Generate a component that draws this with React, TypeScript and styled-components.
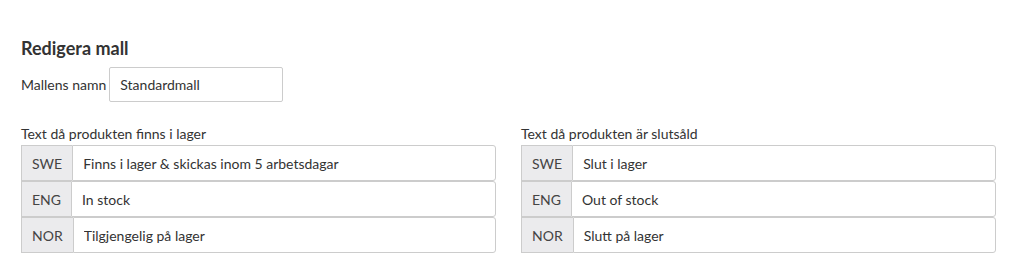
import styled, { createGlobalStyle } from 'styled-components';

const GlobalStyle = createGlobalStyle`
  html, body {
    margin: 0;
    padding: 0;
    background: #ffffff;
    font-family: 'Lato', 'Liberation Sans', sans-serif;
    color: #333333;
  }
`;

type Row = { lang: string; text: string };

const inStock: Row[] = [
  { lang: 'SWE', text: 'Finns i lager & skickas inom 5 arbetsdagar' },
  { lang: 'ENG', text: 'In stock' },
  { lang: 'NOR', text: 'Tilgjengelig på lager' },
];

const soldOut: Row[] = [
  { lang: 'SWE', text: 'Slut i lager' },
  { lang: 'ENG', text: 'Out of stock' },
  { lang: 'NOR', text: 'Slutt på lager' },
];

const TextGroup = ({ label, rows }: { label: string; rows: Row[] }) => (
  <Group>
    <GroupLabel>{label}</GroupLabel>
    {rows.map((row) => (
      <InputGroup key={row.lang}>
        <Addon>{row.lang}</Addon>
        <GroupInput defaultValue={row.text} />
      </InputGroup>
    ))}
  </Group>
);

const App = () => {
  return (
    <Page>
      <GlobalStyle />
      <Title>Redigera mall</Title>
      <NameRow>
        <NameLabel>Mallens namn</NameLabel>
        <NameInput defaultValue="Standardmall" />
      </NameRow>
      <Columns>
        <TextGroup label="Text då produkten finns i lager" rows={inStock} />
        <TextGroup label="Text då produkten är slutsåld" rows={soldOut} />
      </Columns>
    </Page>
  );
};

export default App;

const Page = styled.div`
  padding: 38px 21px 0 21px;
  width: 1025px;
  height: 276px;
  box-sizing: border-box;
`;

const Title = styled.h2`
  margin: 0;
  font-size: 18px;
  line-height: 20px;
  font-weight: 700;
  color: #333333;
`;

const NameRow = styled.div`
  display: flex;
  align-items: center;
  margin-top: 9px;
  gap: 3px;
`;

const NameLabel = styled.label`
  font-size: 14px;
  color: #333333;
`;

const NameInput = styled.input`
  box-sizing: border-box;
  width: 174px;
  height: 35px;
  padding: 0 10px;
  border: 1px solid #cccccc;
  border-radius: 2px;
  font-family: inherit;
  font-size: 14px;
  color: #333333;
  outline: none;
`;

const Columns = styled.div`
  display: grid;
  grid-template-columns: 475px 475px;
  column-gap: 25px;
  margin-top: 24px;
`;

const Group = styled.div`
  display: flex;
  flex-direction: column;
`;

const GroupLabel = styled.label`
  font-size: 14px;
  line-height: 16px;
  margin-bottom: 3px;
  color: #333333;
`;

const InputGroup = styled.div`
  display: flex;
  height: 36px;
  box-sizing: border-box;
`;

const Addon = styled.span`
  display: flex;
  align-items: center;
  padding: 0 10px;
  background: #ebebed;
  border: 1px solid #cccccc;
  border-right: none;
  font-size: 14px;
  color: #444444;
`;

const GroupInput = styled.input`
  flex: 1;
  min-width: 0;
  box-sizing: border-box;
  height: 100%;
  padding: 0 10px;
  border: 1px solid #cccccc;
  border-radius: 0 3px 3px 0;
  font-family: inherit;
  font-size: 14px;
  color: #333333;
  outline: none;
`;
